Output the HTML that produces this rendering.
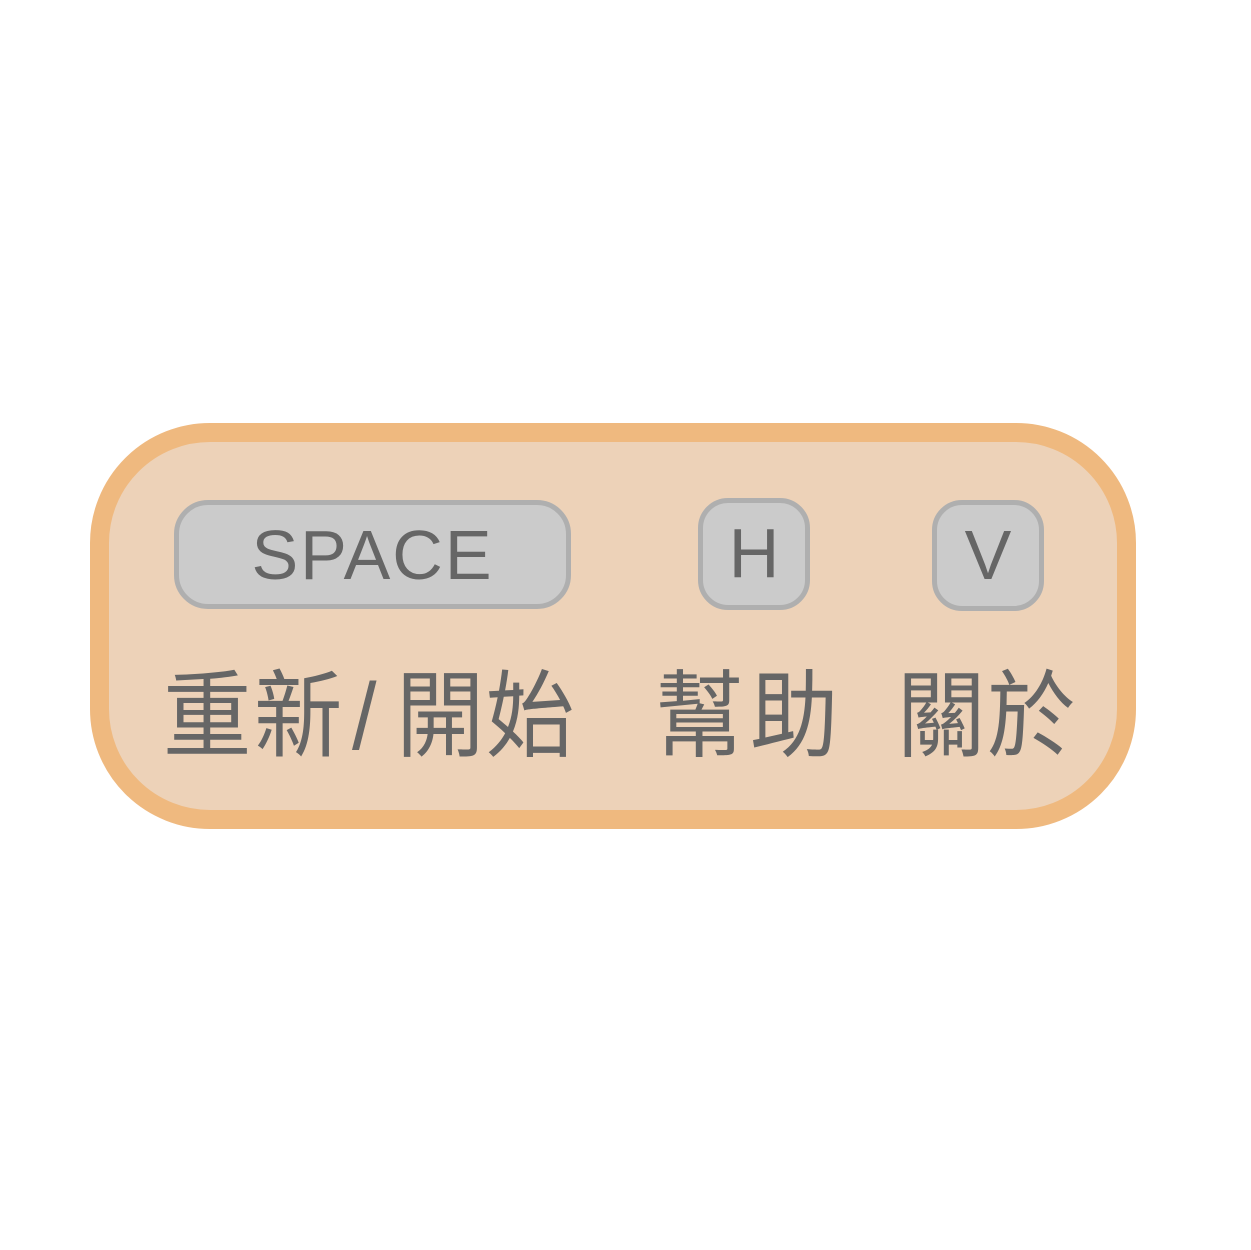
<!DOCTYPE html>
<html><head><meta charset="utf-8"><style>
body{margin:0;width:1251px;height:1250px;background:#fff;position:relative;overflow:hidden}
.panel{position:absolute;left:90px;top:423px;width:1008px;height:368px;background:#EDD2B8;border:19px solid #EFB97F;border-radius:120px}
.key{position:absolute;box-sizing:border-box;background:#CBCBCB;border:5px solid #AFAFAF;border-radius:34px;color:#666;font-family:"Liberation Sans",sans-serif;font-size:70px;text-align:center;line-height:100px}
.c{position:absolute;top:670px;font-family:"Liberation Sans","Noto Sans CJK TC",sans-serif;font-size:95px;line-height:95px;color:#666;transform:scaleX(0.93);transform-origin:left top}
</style></head><body>
<div class="panel"></div>
<div class="key" style="left:174px;top:500px;width:397px;height:109px;letter-spacing:2px">SPACE</div>
<div class="key" style="left:698px;top:498px;width:112px;height:112px;border-radius:30px">H</div>
<div class="key" style="left:932px;top:500px;width:112px;height:111px;border-radius:30px">V</div>
<div class="c" style="left:163px">重</div>
<div class="c" style="left:254px">新</div>
<div class="c" style="left:352px;font-family:'Liberation Sans',sans-serif">/</div>
<div class="c" style="left:396px">開</div>
<div class="c" style="left:486px">始</div>
<div class="c" style="left:655px">幫</div>
<div class="c" style="left:750px">助</div>
<div class="c" style="left:897px">關</div>
<div class="c" style="left:987px">於</div>
</body></html>
